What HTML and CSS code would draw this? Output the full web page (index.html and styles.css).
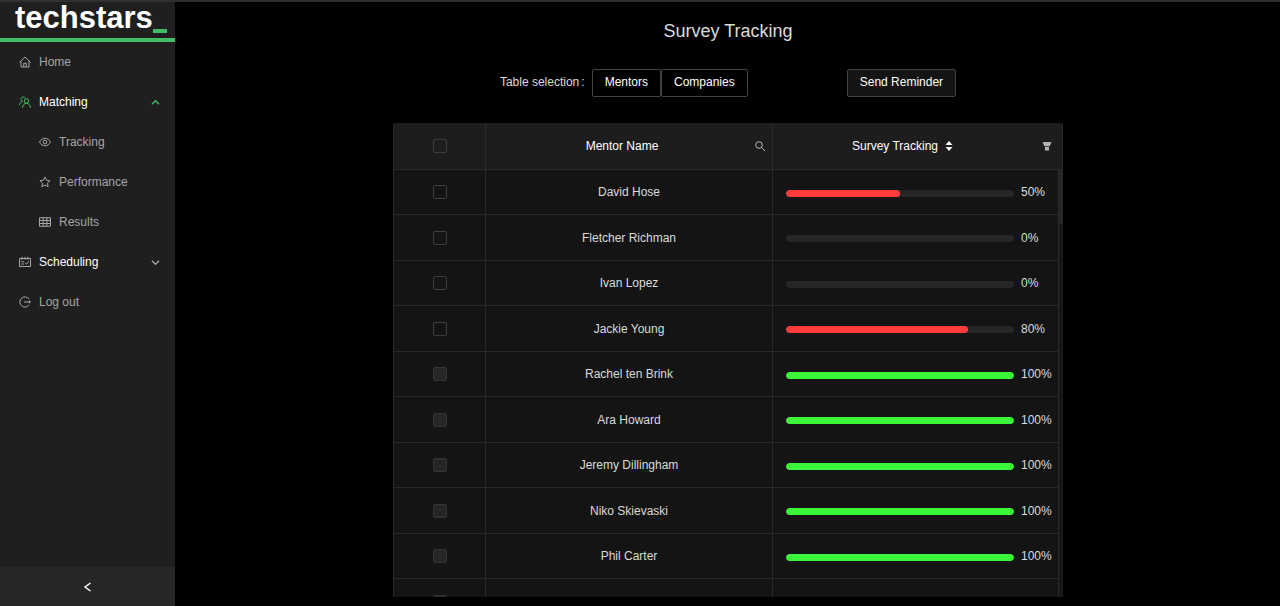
FILE: index.html
```html
<!DOCTYPE html>
<html lang="en">
<head>
<meta charset="utf-8">
<title>Survey Tracking</title>
<link rel="stylesheet" href="styles.css">
</head>
<body>
<div class="layout">
  <aside class="sider">
    <a class="logo" href="#">techstars<span class="logo-mark"></span></a>
    <nav class="menu">
      <a class="item" href="#"><svg class="icon" viewBox="0 0 24 24"><path d="M.8 12.800 12 2l11.200 10.800M4 10.500V22h16V10.500M9.500 21.500v-7h5v7"/></svg>Home</a>
      <button class="item open" type="button" aria-expanded="true"><svg class="icon green" viewBox="0 0 24 24"><circle cx="15" cy="10" r="4.500"/><path d="M7 23.500c.3-5 3.500-9 8-9s7.500 4 8 9M13 5C12.500 3 10.500 2 8.500 2 6 2 4 4 4 6.500S5.500 10.500 8 11M1 18.500c.3-3.500 2.500-6.500 6-7.500"/></svg>Matching<svg class="arrow green" viewBox="0 0 10 10"><path d="M1 7l4-4 4 4"/></svg></button>
      <a class="item sub" href="#"><svg class="icon" viewBox="0 0 24 24"><path d="M1 12c2.500-5 6.500-7.500 11-7.500S20.500 7 23 12c-2.500 5-6.500 7.500-11 7.500S3.500 17 1 12z"/><circle cx="12" cy="12" r="3.700"/></svg>Tracking</a>
      <a class="item sub" href="#"><svg class="icon" viewBox="0 0 24 24"><path d="M12 2l3.100 6.400 7 1-5.100 4.900 1.200 7L12 18l-6.200 3.300 1.200-7L1.900 9.400l7-1z"/></svg>Performance</a>
      <a class="item sub" href="#"><svg class="icon" viewBox="0 0 24 24"><path d="M1 3.500h22v17H1zM1 9h22M1 15h22M8.300 3.500v17M15.700 3.500v17"/></svg>Results</a>
      <button class="item open" type="button" aria-expanded="false"><svg class="icon dim" viewBox="0 0 24 24"><path d="M1 5h22v16H1zM6 1.500V7.500M12 1.500V7.500M18 1.500V7.500M4.500 11.500h5.500M4.500 16h5.500M12.500 13.500l2.500 3 4.500-6"/></svg>Scheduling<svg class="arrow dim" viewBox="0 0 10 10"><path d="M1 3l4 4 4-4"/></svg></button>
      <a class="item" href="#"><svg class="icon" viewBox="0 0 24 24"><path d="M20.500 6.500A10.200 10.200 0 1 0 20.500 17.500M10 12h12"/><path d="M20 8.500l4 3.500-4 3.500z" fill="currentColor" stroke="none"/></svg>Log out</a>
    </nav>
    <button class="collapse" type="button" aria-label="Collapse menu"><svg class="collapse-icon" viewBox="0 0 12 12"><path d="M8.500 2 3 6l5.500 4"/></svg></button>
  </aside>
  <main class="main">
    <h1 class="title">Survey Tracking</h1>
    <div class="toolbar">
      <div class="selection"><span class="label">Table selection<span class="colon">:</span></span><button class="btn" type="button">Mentors</button><button class="btn" type="button">Companies</button></div>
      <button class="btn filled" type="button">Send Reminder</button>
    </div>
    <section class="panel">
      <table class="grid head">
        <colgroup><col class="c-check"><col class="c-name"><col></colgroup>
        <thead><tr>
          <th><input class="check" type="checkbox" aria-label="Select all"></th>
          <th><div class="th-row named"><span class="th-title">Mentor Name</span><button class="tool" type="button" aria-label="Search"><svg class="search" viewBox="0 0 12 12"><circle cx="5" cy="5" r="3.300"/><path d="M7.500 7.500l3.500 3.500"/></svg></button></div></th>
          <th><div class="th-row"><span class="th-title">Survey Tracking<svg class="sorter" viewBox="0 0 8 12"><path d="M4 1l3.500 4h-7zM4 11l3.500-4h-7z"/></svg></span><button class="tool filter" type="button" aria-label="Filter"><svg class="funnel" viewBox="0 0 10 10"><path d="M.5 1h9L7.700 5.300H2.300zM3 6h4v3.500H3z"/></svg></button></div></th>
        </tr></thead>
      </table>
      <div class="viewport">
        <div class="scroller">
          <table class="grid rows">
            <colgroup><col class="c-check"><col class="c-name"><col></colgroup>
            <tbody>
              <tr><td><input class="check" type="checkbox" aria-label="David Hose"></td><td>David Hose</td><td><div class="progress"><div class="bar"><div class="fill" style="width:50%"></div></div><span class="pct">50%</span></div></td></tr>
              <tr><td><input class="check" type="checkbox" aria-label="Fletcher Richman"></td><td>Fletcher Richman</td><td><div class="progress"><div class="bar"></div><span class="pct">0%</span></div></td></tr>
              <tr><td><input class="check" type="checkbox" aria-label="Ivan Lopez"></td><td>Ivan Lopez</td><td><div class="progress"><div class="bar"></div><span class="pct">0%</span></div></td></tr>
              <tr><td><input class="check" type="checkbox" aria-label="Jackie Young"></td><td>Jackie Young</td><td><div class="progress"><div class="bar"><div class="fill" style="width:80%"></div></div><span class="pct">80%</span></div></td></tr>
              <tr><td><input class="check" type="checkbox" disabled aria-label="Rachel ten Brink"></td><td>Rachel ten Brink</td><td><div class="progress"><div class="bar"><div class="fill done" style="width:100%"></div></div><span class="pct">100%</span></div></td></tr>
              <tr><td><input class="check" type="checkbox" disabled aria-label="Ara Howard"></td><td>Ara Howard</td><td><div class="progress"><div class="bar"><div class="fill done" style="width:100%"></div></div><span class="pct">100%</span></div></td></tr>
              <tr><td><input class="check" type="checkbox" disabled aria-label="Jeremy Dillingham"></td><td>Jeremy Dillingham</td><td><div class="progress"><div class="bar"><div class="fill done" style="width:100%"></div></div><span class="pct">100%</span></div></td></tr>
              <tr><td><input class="check" type="checkbox" disabled aria-label="Niko Skievaski"></td><td>Niko Skievaski</td><td><div class="progress"><div class="bar"><div class="fill done" style="width:100%"></div></div><span class="pct">100%</span></div></td></tr>
              <tr><td><input class="check" type="checkbox" disabled aria-label="Phil Carter"></td><td>Phil Carter</td><td><div class="progress"><div class="bar"><div class="fill done" style="width:100%"></div></div><span class="pct">100%</span></div></td></tr>
              <tr><td><input class="check" type="checkbox" disabled aria-label="Select mentor"></td><td></td><td></td></tr>
            </tbody>
          </table>
        </div>
        <div class="rail"><div class="thumb"></div></div>
      </div>
    </section>
  </main>
</div>
</body>
</html>
```
FILE: styles.css
```css
* { box-sizing: border-box; }
body {
  margin: 0;
  background: #000;
  color: #dbdbdb;
  font: 12px/20px "Liberation Sans", Arial, sans-serif;
}
button { font: inherit; color: inherit; background: none; border: 0; padding: 0; cursor: pointer; }
a { color: inherit; text-decoration: none; }
svg { fill: none; stroke: currentColor; flex: none; }

.layout { display: flex; height: 100vh; border-top: 2px solid #303030; }

.sider { width: 175px; flex: none; display: flex; flex-direction: column; background: #1f1f1f; }
.logo {
  display: flex;
  align-items: flex-end;
  height: 40px;
  padding: 0 0 5px 15px;
  border-bottom: 4px solid #44bb66;
  color: #fff;
  font-size: 31px;
  font-weight: bold;
  line-height: 30px;
}
.logo-mark { width: 14px; height: 4px; background: #44bb66; }
.menu { flex: 1; }
.item {
  display: flex;
  align-items: center;
  gap: 8px;
  width: 100%;
  height: 40px;
  padding: 0 15px 0 19px;
  color: #a6a6a6;
  text-align: left;
}
.item.sub { padding-left: 39px; }
.item.open { color: #fff; }
.icon { width: 12px; height: 12px; stroke-width: 2; }
.arrow { width: 9px; height: 9px; margin-left: auto; stroke-width: 1.400; }
.green { color: #44bb66; }
.dim { color: #a6a6a6; }
.collapse { display: grid; place-items: center; height: 39px; background: #262626; color: #fff; }
.collapse-icon { width: 12px; height: 12px; stroke-width: 1.400; }

.main { flex: 1; min-width: 0; display: flex; flex-direction: column; align-items: center; padding: 17px 16px 9px 17px; }
.title { margin: 0 0 26px; font-size: 18px; font-weight: normal; line-height: 24px; }
.toolbar { display: flex; justify-content: center; gap: 99px; margin-bottom: 26px; }
.selection { display: flex; align-items: center; }
.label { margin-right: 7px; line-height: 24px; padding-bottom: 2px; }
.colon { margin-left: 2px; }
.btn { height: 28px; padding: 0 12px 2px; border: 1px solid #434343; border-radius: 2px; color: #fff; }
.filled { background: #141414; }

.panel { flex: 1; min-height: 0; width: 100%; max-width: 670px; display: flex; flex-direction: column; background: #141414; border-radius: 2px 2px 0 0; overflow: hidden; border-left: 1px solid #262626; }
.grid { width: 100%; table-layout: fixed; border-collapse: separate; border-spacing: 0; text-align: center; }
.grid th, .grid td { padding: 0; border-right: 1px solid #292929; border-bottom: 1px solid #292929; font-weight: normal; vertical-align: middle; }
.c-check { width: 92px; }
.c-name { width: 287px; }
.head { background: #1d1d1d; color: #fff; }
.head th { height: 47px; }
.rows tr { height: 45px; }
.rows tr:nth-child(even) { height: 46px; }
.check { appearance: none; display: block; width: 14px; height: 14px; margin: 0 auto; border: 1px solid #3d3d3d; border-radius: 2px; }
.check:disabled { background: #262626; border-color: #363636; }
.th-row { display: flex; align-items: center; }
.named { padding-left: 10px; }
.th-title { flex: 1; display: flex; justify-content: center; align-items: center; gap: 7px; }
.tool { width: 24px; height: 24px; display: grid; place-items: center; color: #b4b4b4; }
.filter { width: 30px; }
.search { width: 12px; height: 12px; }
.sorter { width: 8px; height: 12px; fill: #fff; stroke: none; }
.funnel { width: 10px; height: 10px; fill: #b4b4b4; stroke: none; }

.viewport { flex: 1; min-height: 0; display: flex; }
.scroller { flex: 1; overflow-y: auto; scrollbar-width: none; }
.rail { width: 4px; background: #181818; }
.thumb { height: 54px; background: #262626; }
.progress { display: flex; align-items: center; gap: 7px; padding: 0 6px 0 13px; }
.bar { flex: 1; height: 7px; margin-top: 2px; border-radius: 4px; background: #262626; overflow: hidden; }
.fill { height: 100%; border-radius: 4px; background: #ff3b3b; }
.fill.done { background: #3bf53b; }
.pct { width: 31px; text-align: left; }
```
